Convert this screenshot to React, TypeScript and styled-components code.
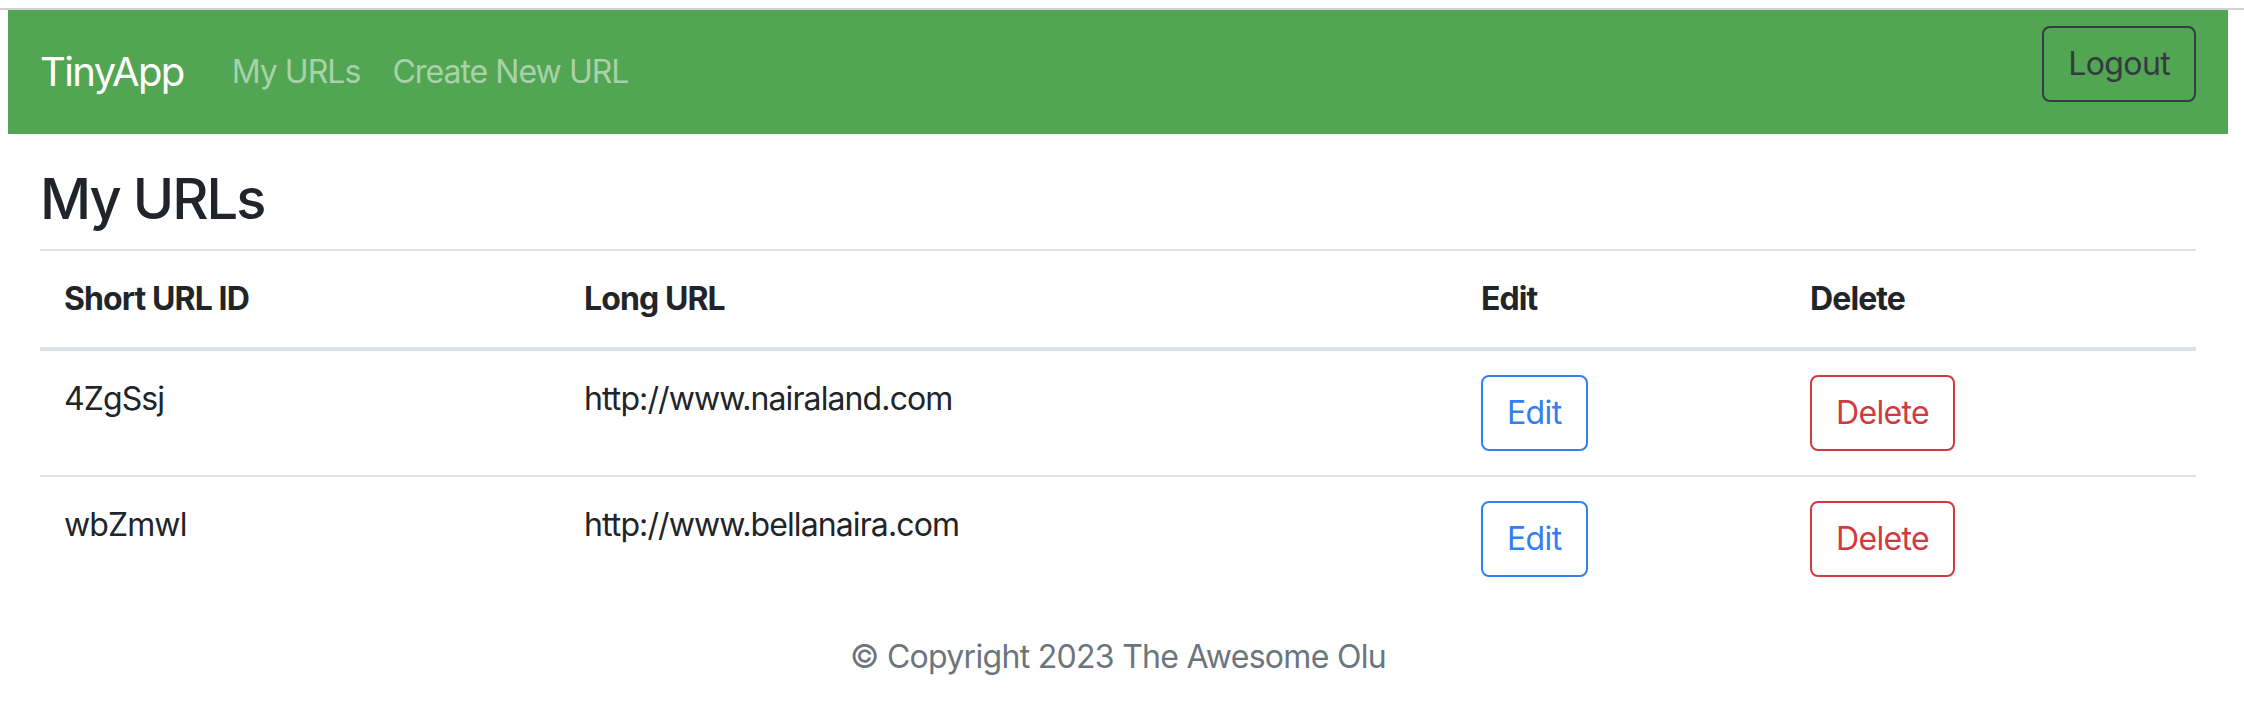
import React from "react";
import styled, { createGlobalStyle } from "styled-components";

const GlobalStyle = createGlobalStyle`
  body {
    margin: 0;
    background: #fff;
    color: #212529;
    font-family: Inter, "Helvetica Neue", "Liberation Sans", Arial, sans-serif;
  }
`;

const urls = [
  { id: "4ZgSsj", longURL: "http://www.nairaland.com" },
  { id: "wbZmwl", longURL: "http://www.bellanaira.com" },
];

const tones = {
  dark: "#343a40",
  primary: "#3380f0",
  danger: "#d03a40",
};

const Edge = styled.div`
  height: 8px;
  border-bottom: 2px solid #d2d2d2;
`;

const Page = styled.div`
  margin: 0 16px 0 8px;
`;

const Navbar = styled.nav`
  display: flex;
  align-items: center;
  padding: 16px 32px;
  background: #52a552;
`;

const Brand = styled.a`
  padding: 10px 0;
  margin-right: 32px;
  font-size: 40px;
  line-height: 60px;
  letter-spacing: -0.04em;
  color: #fff;
  text-decoration: none;
`;

const NavLinks = styled.div`
  display: flex;
`;

const NavLink = styled.a`
  padding: 0 16px;
  font-size: 32px;
  line-height: 48px;
  letter-spacing: -0.03em;
  color: rgba(255, 255, 255, 0.5);
  text-decoration: none;
`;

const LogoutForm = styled.form`
  display: flex;
  margin: 0 0 16px auto;
`;

const OutlineButton = styled.button<{ $tone: keyof typeof tones }>`
  padding: 12px 24px;
  font-family: inherit;
  font-size: 32px;
  line-height: 48px;
  letter-spacing: -0.02em;
  color: ${(p) => tones[p.$tone]};
  background: transparent;
  border: 2px solid ${(p) => tones[p.$tone]};
  border-radius: 8px;
  cursor: pointer;
`;

const Main = styled.main`
  padding: 32px 32px 0;
`;

const Title = styled.h3`
  margin: 0 0 16px;
  font-size: 56px;
  font-weight: 500;
  line-height: 1.2;
  letter-spacing: -0.035em;
`;

const Table = styled.table`
  width: 100%;
  margin-bottom: 32px;
  border-collapse: collapse;
  table-layout: fixed;
  font-size: 32px;
  line-height: 48px;
  letter-spacing: -0.028em;
`;

const Col = styled.col<{ $w?: number }>`
  width: ${(p) => (p.$w ? `${p.$w}px` : "auto")};
`;

const Th = styled.th`
  padding: 24px;
  text-align: left;
  vertical-align: bottom;
  font-weight: 700;
  border-top: 2px solid #dee2e6;
  border-bottom: 4px solid #dee2e6;
`;

const Td = styled.td`
  padding: 24px;
  vertical-align: top;
  border-top: 2px solid #dee2e6;
`;

const Footer = styled.footer`
  text-align: center;
  font-size: 32px;
  line-height: 48px;
  letter-spacing: -0.022em;
  color: #6c757d;
`;

export default function App() {
  return (
    <>
      <GlobalStyle />
      <Edge />
      <Page>
        <Navbar>
          <Brand>TinyApp</Brand>
          <NavLinks>
            <NavLink>My URLs</NavLink>
            <NavLink>Create New URL</NavLink>
          </NavLinks>
          <LogoutForm onSubmit={(e) => e.preventDefault()}>
            <OutlineButton $tone="dark">Logout</OutlineButton>
          </LogoutForm>
        </Navbar>
        <Main>
          <Title>My URLs</Title>
          <Table>
            <colgroup>
              <Col $w={520} />
              <Col $w={897} />
              <Col $w={329} />
              <Col />
            </colgroup>
            <thead>
              <tr>
                <Th>Short URL ID</Th>
                <Th>Long URL</Th>
                <Th>Edit</Th>
                <Th>Delete</Th>
              </tr>
            </thead>
            <tbody>
              {urls.map((u) => (
                <tr key={u.id}>
                  <Td>{u.id}</Td>
                  <Td>{u.longURL}</Td>
                  <Td>
                    <OutlineButton $tone="primary">Edit</OutlineButton>
                  </Td>
                  <Td>
                    <OutlineButton $tone="danger">Delete</OutlineButton>
                  </Td>
                </tr>
              ))}
            </tbody>
          </Table>
        </Main>
        <Footer>© Copyright 2023 The Awesome Olu</Footer>
      </Page>
    </>
  );
}
